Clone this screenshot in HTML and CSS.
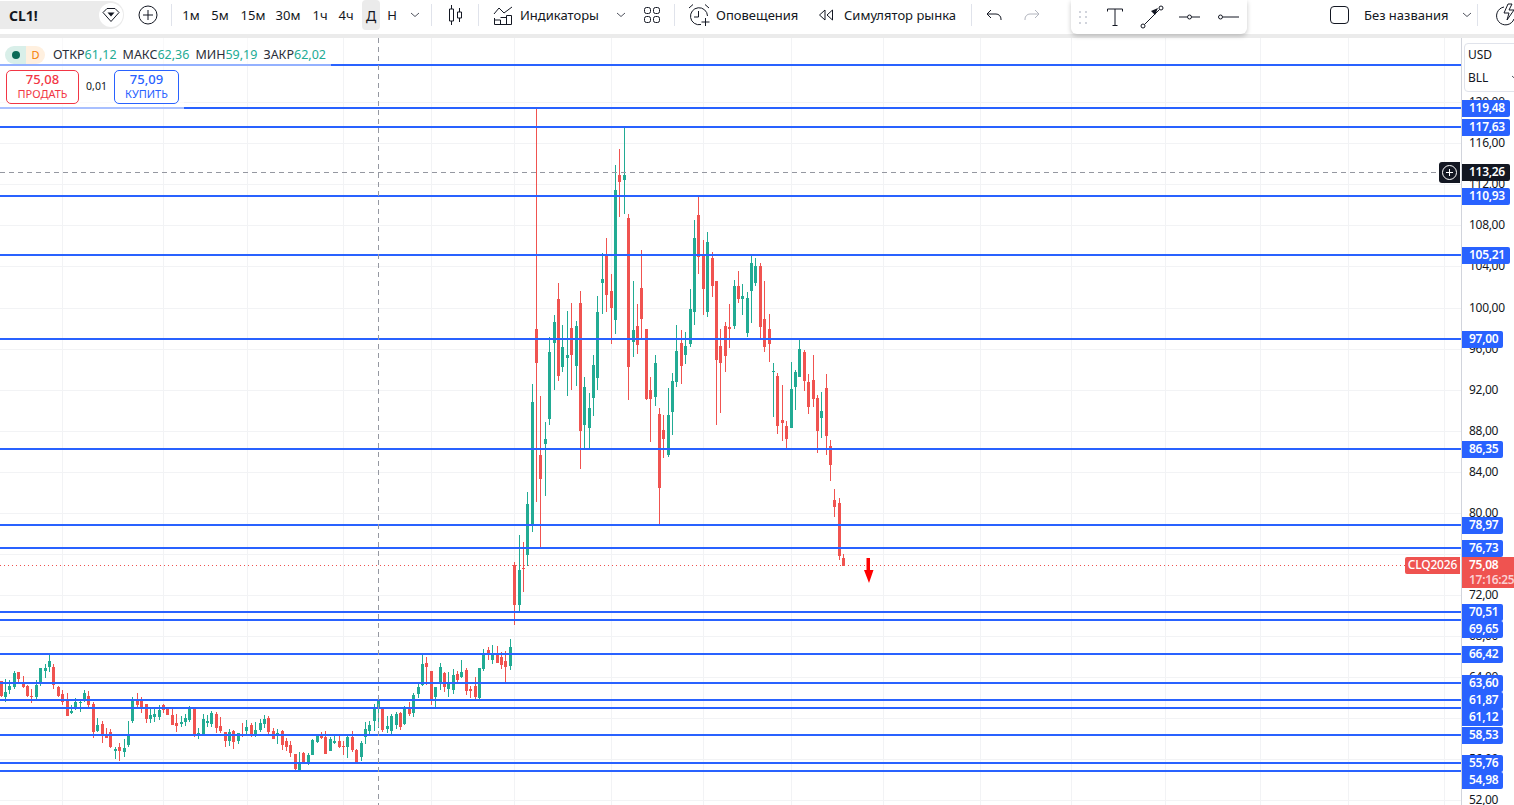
FILE: index.html
```html
<!DOCTYPE html>
<html lang="ru">
<head>
<meta charset="utf-8">
<title>CL1! Chart</title>
<link rel="stylesheet" href="styles.css">
</head>
<body>
<header class="toolbar">
  <div class="symbol"><span class="ticker">CL1!</span>
    <span class="gem"><svg width="20" height="18" viewBox="0 0 20 18"><path class="ic" d="M2 6.5 6 2.5h8l4 4-8 9z"/><path d="M6.5 6.5h7L10 10.5z" fill="#131722"/></svg></span>
  </div>
  <button class="btn add"><svg width="20" height="20" viewBox="0 0 20 20"><circle class="ic" cx="10" cy="10" r="9"/><path class="ic" d="M10 5v10M5 10h10"/></svg></button>
  <i class="sep s-a"></i>
  <div class="intervals">
    <span>1м</span><span>5м</span><span>15м</span><span>30м</span><span>1ч</span><span>4ч</span><i></i><span class="active">Д</span><span>Н</span>
    <span><svg class="chev" width="10" height="6" viewBox="0 0 10 6"><path d="M1 1l4 3.5L9 1"/></svg></span>
  </div>
  <i class="sep s-b"></i>
  <button class="btn candle"><svg width="16" height="20" viewBox="0 0 16 20"><path class="ic" d="M4.5 0v4M4.5 16v4M12.5 3v4M12.5 13v4M2.5 4h4v12h-4zM10.500 7h4v6h-4z"/></svg></button>
  <i class="sep"></i>
  <svg class="ind-icon" width="20" height="20" viewBox="0 0 20 20"><path class="ic" d="M1 9l5-6 5 5 8-6M1.500 13v6.500h17V10.500h-5v9M1.500 15h6v4.500M7.500 12.500h6"/></svg>
  <span class="label w-ind">Индикаторы</span>
  <svg class="chev c-ind" width="10" height="6" viewBox="0 0 10 6"><path d="M1 1l4 3.500L9 1"/></svg>
  <svg class="grid-icon" width="18" height="18" viewBox="0 0 18 18"><rect class="ic" x="1.500" y="1.500" width="6" height="6" rx="2"/><rect class="ic" x="10.500" y="1.500" width="6" height="6" rx="2"/><rect class="ic" x="1.500" y="10.500" width="6" height="6" rx="2"/><rect class="ic" x="10.500" y="10.500" width="6" height="6" rx="2"/></svg>
  <i class="sep s-c"></i>
  <svg class="alert-icon" width="22" height="24" viewBox="0 0 22 24"><path class="ic" d="M13 21.500A8.500 8.500 0 1 1 19.500 13M10.500 8v6H6M1 5l4-3.500M17 1.500l4 3.500M17.500 15v8M13.500 19h8"/></svg>
  <span class="label w-alert">Оповещения</span>
  <svg class="rew-icon" width="16" height="12" viewBox="0 0 16 12"><path class="ic" d="M7 1 1.500 6 7 11zM14.500 1 9 6l5.500 5z"/></svg>
  <span class="label w-sim">Симулятор рынка</span>
  <i class="sep s-d"></i>
  <svg class="undo" width="16" height="12" viewBox="0 0 16 12"><path class="ic" d="M5 1 1 5l4 4M1 5h9a5 5 0 0 1 5 5v1"/></svg>
  <svg class="redo" width="16" height="12" viewBox="0 0 16 12"><path class="ic muted" d="M11 1l4 4-4 4M15 5H6a5 5 0 0 0-5 5v1"/></svg>
  <svg class="check" width="20" height="20" viewBox="0 0 20 20"><rect class="ic" x="0.500" y="1.500" width="18" height="17" rx="3.500"/></svg>
  <span class="label w-name">Без названия</span>
  <svg class="chev c-name" width="10" height="6" viewBox="0 0 10 6"><path d="M1 1l4 3.500L9 1"/></svg>
  <i class="sep s-e"></i>
  <svg class="quick" width="24" height="24" viewBox="0 0 24 24"><path class="ic" d="M8 4a9 9 0 1 0 10 12l4 5M12 1l-4 9h5l-2 7 7-10h-5l3-6z"/></svg>
</header>
<div class="float-tools">
  <svg class="drag" width="8" height="13" viewBox="0 0 8 13"><path d="M0 0h2v2H0zM6 0h2v2H6zM0 5h2v2H0zM6 5h2v2H6zM0 11h2v2H0zM6 11h2v2H6z" fill="#d1d4dc"/></svg>
  <svg class="t-text" width="16" height="18" viewBox="0 0 16 18"><path class="ic" d="M.500 3.500V1h15v2.500M8 1v16.500M5.500 17.500h5"/></svg>
  <svg class="t-arrow" width="24" height="24" viewBox="0 0 24 24"><circle class="ic" cx="3" cy="21" r="2"/><circle class="ic" cx="21" cy="3" r="2"/><path class="ic" d="M4.500 19.500 19.500 4.500"/><path d="M18 3l-7 3 4 4z" fill="#131722"/></svg>
  <svg class="t-line" width="21" height="6" viewBox="0 0 21 6"><path class="ic" d="M0 3h8M13 3h8"/><circle class="ic" cx="10.500" cy="3" r="2"/></svg>
  <svg class="t-ray" width="21" height="6" viewBox="0 0 21 6"><path class="ic" d="M5 3h16"/><circle class="ic" cx="2.500" cy="3" r="2"/></svg>
</div>
<main class="workspace">
  <section class="pane">
    <svg id="chart" class="chart" viewBox="0 38 1461 767" width="1461" height="767" shape-rendering="crispEdges"></svg>
    <div class="legend">
      <span class="status"><span class="st-live"><b></b></span><span class="st-d">D</span></span>
      <span class="ohlc">ОТКР<em>61,12</em></span>
      <span class="ohlc">МАКС<em>62,36</em></span>
      <span class="ohlc">МИН<em>59,19</em></span>
      <span class="ohlc">ЗАКР<em>62,02</em></span>
    </div>
    <div class="trade">
      <div class="tbtn sell"><strong>75,08</strong><small>ПРОДАТЬ</small></div>
      <span class="spread">0,01</span>
      <div class="tbtn buy"><strong>75,09</strong><small>КУПИТЬ</small></div>
    </div>
    <span class="cross-add"><svg width="15" height="15" viewBox="0 0 15 15"><circle cx="7.500" cy="7.500" r="7" fill="none" stroke="#fff"/><path d="M7.500 4v7M4 7.500h7" stroke="#fff"/></svg></span>
    <span class="sym-tag">CLQ2026</span>
  </section>
  <aside class="axis" id="axis">
    <div class="units">
      <span class="unit">USD<svg class="chev" width="10" height="6" viewBox="0 0 10 6"><path d="M1 1l4 3.500L9 1"/></svg></span>
      <span class="unit">BLL<svg class="chev" width="10" height="6" viewBox="0 0 10 6"><path d="M1 1l4 3.500L9 1"/></svg></span>
    </div>
  </aside>
</main>
<script src="chart.js"></script>
</body>
</html>
```
FILE: styles.css
```css
* { box-sizing: border-box; }
html, body { margin: 0; height: 100%; overflow: hidden; background: #fff; }
body { width: 1514px; height: 805px; display: flex; flex-direction: column; font-family: "Noto Sans", "Open Sans", sans-serif; color: #131722; }
i { display: block; font-style: normal; }
.ic { fill: none; stroke: #131722; stroke-width: 1; }
.ic.muted { stroke: #b2b5be; }
.toolbar { height: 38px; flex: none; display: flex; align-items: center; padding-bottom: 4px; border-bottom: 4px solid #ebebeb; overflow: hidden; white-space: nowrap; font-size: 13px; }
.symbol { width: 124px; height: 28px; background: #ebebeb; border-radius: 0 14px 14px 0; display: flex; align-items: center; justify-content: space-between; padding: 0 1px 0 9px; flex: none; }
.ticker { font-size: 14px; font-weight: 700; }
.gem { width: 24px; height: 24px; border-radius: 50%; background: #fff; display: flex; align-items: center; justify-content: center; }
.btn { background: none; border: 0; padding: 0; display: flex; align-items: center; justify-content: center; flex: none; }
.add { width: 24px; height: 24px; margin-left: 12px; }
.candle { width: 46px; height: 24px; }
.sep { width: 1px; height: 22px; background: #e0e3eb; flex: none; }
.s-a { margin-left: 11px; }
.s-b { margin-left: 5px; }
.s-c { margin-left: 13px; }
.s-d { margin-left: 14px; }
.s-e { margin-left: 5px; }
.intervals { margin-left: 7px; display: grid; grid-template-columns: 24px 34px 32px 38px 26px 26px 3px 18px 24px 22px; height: 30px; align-items: center; justify-items: center; flex: none; }
.intervals span { display: flex; align-items: center; justify-content: center; height: 30px; width: 100%; }
.intervals .active { background: #ebebeb; border-radius: 4px; font-size: 14px; }
.chev { fill: none; stroke: #131722; flex: none; }
.chev path { fill: none; stroke: #50535e; }
.ind-icon { margin-left: 14px; flex: none; }
.label { flex: none; display: block; }
.w-ind { margin-left: 7px; width: 79px; }
.c-ind { margin-left: 17px; }
.grid-icon { margin-left: 17px; flex: none; }
.alert-icon { margin-left: 13px; flex: none; }
.w-alert { margin-left: 6px; width: 81px; }
.rew-icon { margin-left: 21px; flex: none; }
.w-sim { margin-left: 10px; width: 113px; }
.undo { margin-left: 14px; flex: none; }
.redo { margin-left: 22px; flex: none; }
.check { margin-left: 290px; flex: none; }
.w-name { margin-left: 14px; width: 85px; }
.c-name { margin-left: 13px; }
.quick { margin-left: 18px; flex: none; }
.float-tools { position: absolute; left: 1071px; top: 0; width: 176px; height: 34px; background: #fff; border-radius: 0 0 6px 6px; box-shadow: 0 2px 5px rgba(0,0,0,.22); display: flex; align-items: center; z-index: 5; }
.drag { margin-left: 8px; flex: none; }
.t-text { margin-left: 20px; flex: none; }
.t-arrow { margin-left: 17px; flex: none; }
.t-line { margin-left: 15px; flex: none; }
.t-ray { margin-left: 18px; flex: none; }
.workspace { flex: 1; display: flex; min-height: 0; }
.pane { width: 1461px; position: relative; overflow: hidden; flex: none; }
.chart { display: block; }
.legend { position: absolute; left: 0; top: 0; width: 331px; height: 28px; background: rgba(255,255,255,.5); padding: 5px 0 0 5px; display: flex; align-items: center; font-size: 12.500px; color: #2a2e39; line-height: 18px; }
.status { display: flex; height: 18px; width: 40px; margin-right: 8px; margin-left: 0; border-radius: 9px; overflow: hidden; flex: none; }
.st-live { width: 21px; background: #d9efe9; display: flex; align-items: center; justify-content: center; }
.st-live b { width: 8px; height: 8px; border-radius: 50%; background: #0b6b58; }
.st-d { width: 19px; background: #fff0df; color: #f57c00; font-size: 11px; text-align: center; }
.ohlc { margin-right: 6px; }
.ohlc:first-of-type { margin-left: 1px; }
.ohlc em { font-style: normal; color: #22ab94; }
.trade { position: absolute; left: 0; top: 28px; width: 184px; height: 43px; background: rgba(255,255,255,.6); padding: 4px 0 0 6px; display: flex; align-items: flex-start; }
.tbtn { height: 34px; border: 1px solid; border-radius: 5px; display: flex; flex-direction: column; align-items: center; background: #fff; }
.tbtn strong { font-size: 13px; font-weight: 500; line-height: 17px; }
.tbtn small { font-size: 11px; line-height: 12px; }
.sell { width: 73px; border-color: #f23645; color: #f23645; }
.buy { width: 65px; border-color: #2962ff; color: #2962ff; }
.spread { width: 35px; text-align: center; font-size: 10.500px; line-height: 32px; color: #131722; }
.cross-add { position: absolute; left: 1439px; top: 124px; width: 21px; height: 21px; background: #131722; border-radius: 3px 0 0 3px; display: flex; align-items: center; justify-content: center; }
.sym-tag { position: absolute; left: 1405px; top: 519px; width: 55px; height: 17px; background: #ef5350; color: #fff; border-radius: 2px 0 0 2px; font-size: 12px; line-height: 16px; letter-spacing: -.2px; font-weight: 500; text-align: center; }
.axis { flex: 1; position: relative; overflow: hidden; border-left: 1px solid #d1d4dc; font-size: 12px; }
.units { position: absolute; left: 2px; top: 5px; width: 60px; height: 49px; border: 1px solid #e0e3eb; border-radius: 4px; background: #fff; padding-left: 3px; display: grid; grid-template-rows: 21.500px 25.500px; z-index: 3; line-height: 18px; }
.unit { display: flex; align-items: center; }
.unit .chev { margin-left: 23px; }
.tick, .tag { position: absolute; left: 0; height: 17px; line-height: 15px; padding: 0 5px 0 7px; white-space: nowrap; letter-spacing: -.3px; }
.tick { color: #131722; }
.tag { background: #2962ff; color: #fff; border-radius: 0 2px 2px 0; font-weight: 600; z-index: 1; }
.tag.dark { background: #131722; z-index: 2; }
.last { position: absolute; left: 0; top: 519px; width: 53px; height: 31px; background: #ef5350; color: #fff; padding-left: 7px; line-height: 15px; font-weight: 600; letter-spacing: -.3px; z-index: 2; white-space: nowrap; overflow: hidden; }
.last span { display: block; }
.last small { display: block; font-size: 12px; color: #fbd0d2; font-weight: 600; }
```
FILE: chart.js
```js
var NS = 'http://www.w3.org/2000/svg';
var svg = document.getElementById('chart');
var axis = document.getElementById('axis');
function rect(x, y, w, h, fill) {
  var r = document.createElementNS(NS, 'rect');
  r.setAttribute('x', x); r.setAttribute('y', y); r.setAttribute('width', w); r.setAttribute('height', h); r.setAttribute('fill', fill);
  svg.appendChild(r);
}
function dash(x1, y1, x2, y2, color, pattern) {
  var l = document.createElementNS(NS, 'line');
  l.setAttribute('x1', x1); l.setAttribute('y1', y1); l.setAttribute('x2', x2); l.setAttribute('y2', y2);
  l.setAttribute('stroke', color); l.setAttribute('stroke-dasharray', pattern);
  svg.appendChild(l);
}
var GRID = '#f2f3f5';
[62,163,247,343,431,514,611,703,791,883,980,1071,1165,1260,1348,1444].forEach(function (x) { rect(x, 38, 1, 767, GRID); });
var ticks = [['120,00',102],['116,00',143],['112,00',184],['108,00',225],['104,00',266],['100,00',308],['96,00',349],['92,00',390],['88,00',431],['84,00',472],['80,00',513],['76,00',554],['72,00',595],['68,00',636],['64,00',677],['60,00',718],['56,00',759],['52,00',800]];
ticks.forEach(function (t) { rect(0, t[1], 1461, 1, GRID); });

var G = '#22ab94', R = '#f05350';
function candle(x, h, t, b, l, red) {
  var c = red ? R : G;
  rect(x, Math.round(h), 1, Math.max(1, Math.round(l - h)), c);
  rect(x - 1, Math.round(t), 3, Math.max(1, Math.round(b - t)), c);
}
function zoomSeg(ox, oy, list) {
  list.forEach(function (c) {
    candle(Math.floor(ox + c[0] / 3), oy + c[1] / 3, oy + c[2] / 3, oy + c[3] / 3, oy + c[4] / 3, c[5]);
  });
}
zoomSeg(0, 640, [[4,123,123,168,171,1],[16,117,156,171,186,0],[28,120,138,150,162,0],[43,93,99,141,147,0],[55,96,96,117,126,1],[70,108,126,141,144,1],[82,135,138,168,171,1],[94,147,168,171,189,1],[109,120,135,171,183,0],[121,84,84,129,138,0],[136,72,84,93,114,0],[148,45,63,81,96,0],[160,72,81,135,147,1],[175,138,141,168,171,1],[187,150,162,186,195,1],[202,159,183,228,228,1],[214,195,213,219,222,0],[226,174,186,207,210,0],[241,177,186,189,216,0],[253,150,159,180,186,0],[265,153,168,195,204,1],[280,186,192,276,294,1],[292,234,255,273,276,0],[307,243,252,285,309,1],[319,264,282,294,294,1],[331,267,276,321,324,1],[346,321,327,333,357,0],[358,309,321,333,363,1],[373,297,324,336,351,0],[385,243,285,315,321,0],[397,171,177,243,249,0],[412,159,183,195,204,1],[424,171,183,201,219,1],[439,192,192,237,249,1],[451,207,225,237,249,0],[463,204,222,231,246,0],[478,195,210,231,240,0],[490,192,195,210,219,1],[502,204,207,225,225,1],[517,204,225,255,255,1],[529,222,249,258,276,1],[544,228,246,252,261,0],[556,222,234,246,258,0],[568,198,204,240,246,0],[583,207,207,288,291,1],[595,264,279,285,297,0],[610,222,237,282,282,0],[622,225,243,249,261,0],[634,213,219,252,261,0],[649,216,222,264,279,1],[661,231,258,273,279,1],[676,276,276,303,321,1],[688,267,276,303,318,0],[700,270,273,306,327,1],[715,279,279,303,312,0],[727,249,285,288,291,1],[739,240,261,273,285,0],[754,249,255,285,291,1],[766,246,270,285,291,0],[781,237,249,270,276,0],[793,225,237,252,264,0]]);
zoomSeg(260, 620, [[25,288,294,336,342,1],[40,324,333,357,357,1],[52,327,340,342,372,0],[67,330,333,375,390,1],[79,354,363,381,393,1],[91,363,375,399,411,1],[106,402,402,447,453,1],[118,396,427,453,456,0],[130,396,399,426,429,1],[145,399,405,429,435,0],[157,357,360,405,405,0],[172,342,345,366,369,0],[184,336,348,354,357,1],[196,333,351,402,402,1],[211,351,357,393,393,0],[223,345,363,369,372,0],[238,342,363,381,384,1],[250,363,378,381,405,1],[262,345,351,381,414,0],[277,333,351,390,396,1],[289,387,390,429,432,1],[304,363,369,411,423,0],[316,306,327,351,372,0],[328,303,315,333,345,0],[343,252,264,303,333,0],[355,228,237,267,324,0],[367,267,267,330,336,1],[382,288,318,327,339,0],[394,282,288,333,345,0],[409,276,282,315,327,0],[421,276,279,321,330,1],[433,258,264,312,315,0],[448,246,261,282,288,1],[460,219,225,279,291,0],[475,192,201,222,234,0],[487,99,132,195,198,0],[499,111,129,141,195,1],[514,153,153,237,255,1],[526,201,201,231,264,0],[541,129,141,189,210,0],[553,156,159,201,216,1],[565,156,189,207,231,0],[580,147,165,210,222,0],[592,153,162,180,186,1],[604,120,156,171,174,0],[619,144,150,213,225,1],[631,198,207,213,234,1],[646,171,198,231,240,1],[658,144,144,234,237,0],[670,87,99,147,153,0],[685,81,90,102,120,1],[697,75,102,120,132,0],[712,78,105,129,129,1],[724,96,111,135,147,1],[736,93,123,141,189,1],[751,57,81,138,150,0]]);
[[514,562,565,605,625,1],[519,535,570,605,613,0],[523,542,568,569,592,1],[527,492,504,555,566,0],[532,384,402,525,532,0],[536,108,329,363,502,1],[540,396,455,479,548,1],[545,422,439,444,496,0],[549,337,352,419,425,0],[554,315,322,343,390,0],[558,283,299,376,381,1],[562,325,347,367,372,0],[567,311,355,358,396,0],[571,303,328,355,390,1],[576,321,326,366,386,0],[580,291,303,431,469,1],[584,377,387,425,449,0],[589,393,408,428,449,0],[593,355,365,398,416,0],[597,296,312,378,390,0],[602,253,279,283,314,0],[606,238,255,295,312,1],[611,274,291,308,344,1],[615,165,190,320,334,0],[619,149,175,182,217,1],[624,127,175,180,214,0],[628,214,218,367,400,1],[633,281,330,342,357,0],[637,304,326,345,354,1],[641,250,288,319,339,1],[646,329,329,399,400,1],[650,377,390,399,442,1],[655,355,363,397,406,0],[659,408,414,488,525,1],[663,415,430,439,458,1],[668,388,415,455,457,0],[672,373,381,412,435,0],[676,325,351,382,387,0]].forEach(function (c) { candle(c[0], c[1], c[2], c[3], c[4], c[5]); });
zoomSeg(680, 190, [[4,420,460,530,582,1],[16,425,468,495,522,0],[31,297,357,462,470,0],[43,90,144,366,405,0],[55,18,75,200,252,1],[70,150,195,297,375,1],[82,126,156,366,381,0],[97,186,204,288,321,1],[109,273,273,510,705,1],[121,417,468,519,669,1],[136,396,408,498,546,1],[148,342,411,417,474,1],[163,270,288,408,417,0],[175,243,288,327,339,1],[187,282,318,327,375,0],[202,306,324,429,441,0],[214,195,219,303,399,0],[226,204,228,279,288,0],[241,219,228,411,450,1],[253,273,387,471,486,1],[268,372,417,462,516,1],[280,519,543,546,681,0],[292,549,558,708,732,1],[307,585,690,699,753,1],[319,693,708,747,777,1],[334,516,597,714,714,0],[346,540,546,591,660,0],[358,447,477,561,561,0],[373,480,486,573,603,1],[385,552,576,651,672,1],[400,495,570,627,651,1],[412,615,624,723,789,1],[424,606,663,684,744,0],[439,552,594,738,795,1],[451,750,768,825,873,1],[463,897,930,951,981,1],[478,924,939,1098,1110,1],[490,1092,1104,1127,1127,1]]);

var levels = [[null,64],['119,48',107],['117,63',126],['110,93',195],['105,21',254],['97,00',338],['86,35',448],['78,97',524],['76,73',547],['70,51',611,612],['69,65',619,629],['66,42',653,654],['63,60',682,683],['61,87',699,700],['61,12',707,717],['58,53',734,735],['55,76',762,763],['54,98',770,780]];
levels.forEach(function (l) { rect(0, l[1], 1461, 2, '#2962ff'); });

dash(0, 172.5, 1439, 172.5, '#9598a1', '5 4');
dash(378.5, 38, 378.5, 805, '#9598a1', '5 4');
dash(0, 565.5, 1405, 565.5, '#ef5350', '1 3');
var arrow = document.createElementNS(NS, 'path');
arrow.setAttribute('d', 'M866.500 558h3.500v12h3.500l-4.500 13-5-13h2.500z');
arrow.setAttribute('fill', '#f00');
arrow.setAttribute('shape-rendering', 'auto');
svg.appendChild(arrow);

function axisLabel(text, cy, cls) {
  var d = document.createElement('div');
  d.className = cls;
  d.textContent = text;
  d.style.top = (cy - 38 - 8.5) + 'px';
  axis.appendChild(d);
}
ticks.forEach(function (t) { axisLabel(t[0], t[1] + 0.5, 'tick'); });
levels.forEach(function (l) { if (l[0]) axisLabel(l[0], l[2] || l[1] + 1, 'tag'); });
axisLabel('113,26', 172, 'tag dark');
var last = document.createElement('div');
last.className = 'last';
last.innerHTML = '<span>75,08</span><small>17:16:25</small>';
axis.appendChild(last);
```
